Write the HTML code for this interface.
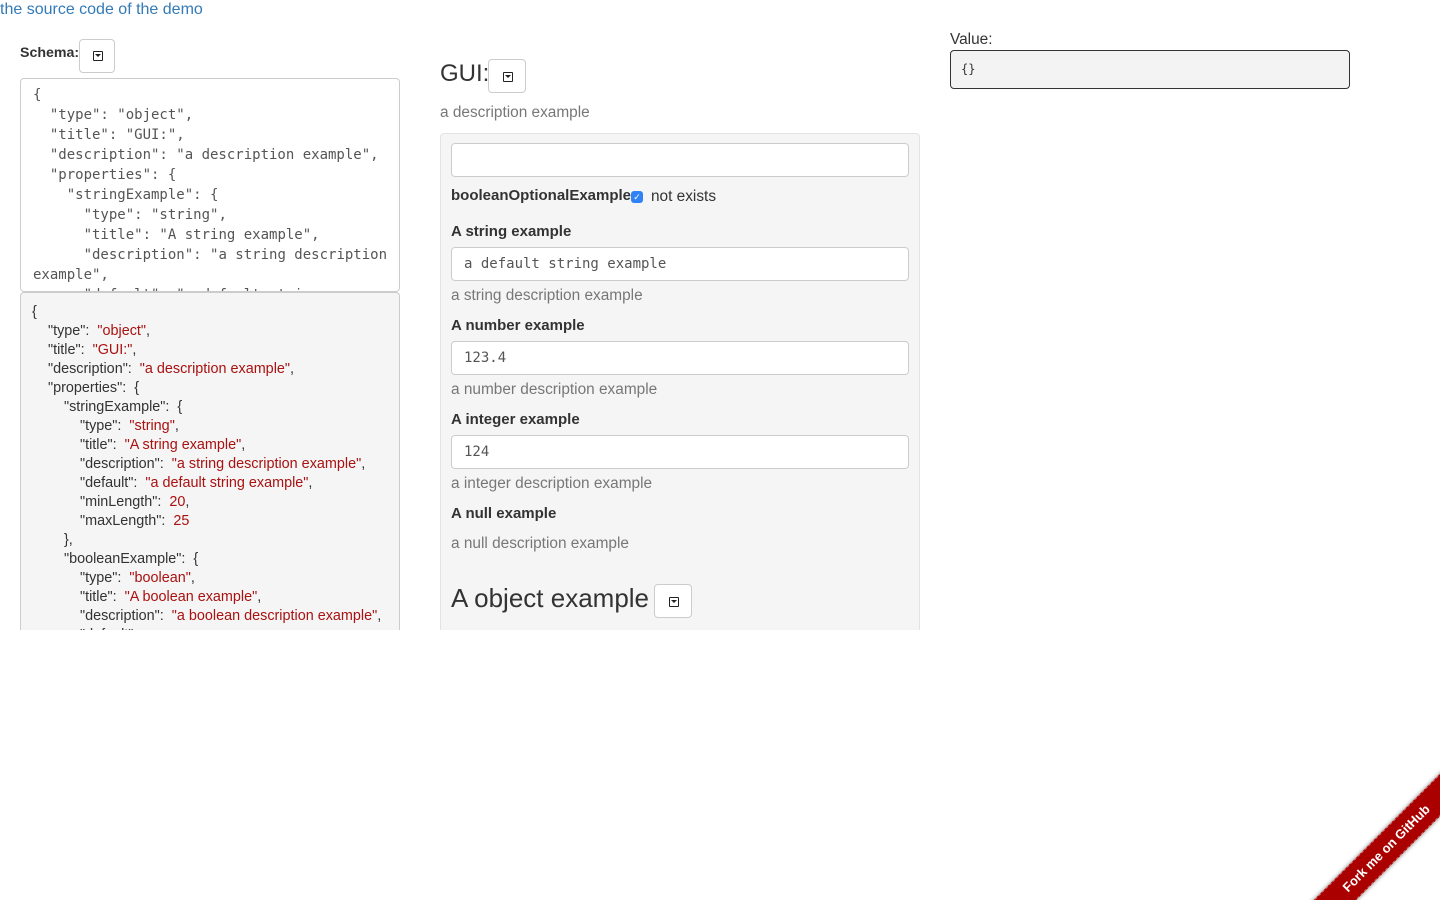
<!DOCTYPE html>
<html style="overflow:hidden;width:1440px;height:900px"><head><meta charset="utf-8"><style>
body{margin:0;width:1440px;height:900px;position:relative;overflow:hidden;background:#fff;font-family:"Liberation Sans",sans-serif;color:#333;font-size:15.4px}
.a{position:absolute}
.btn{position:absolute;width:36px;height:32px;border:1px solid #ccc;border-radius:4px;background:#fff;box-sizing:border-box}
.btn i{position:absolute;left:13px;top:11px;width:8px;height:8px;border:1.5px solid #222;border-radius:1px}
.btn i:after{content:"";position:absolute;left:1px;top:2px;border-left:3px solid transparent;border-right:3px solid transparent;border-top:3px solid #222}
.mono{font-family:"DejaVu Sans Mono","Liberation Mono",monospace}
.inp{position:absolute;left:451px;width:458px;height:34px;border:1px solid #ccc;border-radius:4px;background:#fff;box-sizing:border-box;padding:0 12px;line-height:32px;font-size:14px;color:#555}
.lbl{position:absolute;left:451px;font-weight:bold;font-size:15px;color:#333}
.help{position:absolute;left:451px;font-size:15.4px;color:#777}
pre{margin:0}
.s{color:#a11}
</style></head><body>
<div class="a" style="left:0;top:0;width:1440px;height:900px;overflow:hidden">
<div class="a" style="left:0;top:0;color:#337ab7;font-size:16px;line-height:20px">the source code of the demo</div>

<div class="a" style="left:20px;top:45px;font-weight:bold;font-size:14.2px">Schema:</div>
<div class="btn" style="left:79px;top:39px;height:34px"><i></i></div>
<div class="a" style="left:20px;top:78px;width:380px;height:214px;border:1px solid #ccc;border-radius:4px;box-sizing:border-box;overflow:hidden">
<pre class="mono" style="font-size:14px;line-height:20px;padding:6px 12px;color:#555;white-space:pre-wrap">{
  "type": "object",
  "title": "GUI:",
  "description": "a description example",
  "properties": {
    "stringExample": {
      "type": "string",
      "title": "A string example",
      "description": "a string description example",
      "default": "a default string</pre></div>
<div class="a" style="left:20px;top:292px;width:380px;height:338px;border:1px solid #ccc;border-bottom:none;border-radius:4px 4px 0 0;background:#f5f5f5;box-sizing:border-box;overflow:hidden">
<pre style="font-family:'Liberation Sans',sans-serif;font-size:14.4px;line-height:19px;padding:10px 11px;color:#333">{
    "type":  <span class="s">"object"</span>,
    "title":  <span class="s">"GUI:"</span>,
    "description":  <span class="s">"a description example"</span>,
    "properties":  {
        "stringExample":  {
            "type":  <span class="s">"string"</span>,
            "title":  <span class="s">"A string example"</span>,
            "description":  <span class="s">"a string description example"</span>,
            "default":  <span class="s">"a default string example"</span>,
            "minLength":  <span class="s">20</span>,
            "maxLength":  <span class="s">25</span>
        },
        "booleanExample":  {
            "type":  <span class="s">"boolean"</span>,
            "title":  <span class="s">"A boolean example"</span>,
            "description":  <span class="s">"a boolean description example"</span>,
            "default": </pre></div>

<div class="a" style="left:440px;top:58px;font-size:24px;line-height:32px">GUI:</div>
<div class="btn" style="left:488px;top:59px;height:34px;width:38px"><i style="left:14px;top:12px"></i></div>
<div class="a" style="left:440px;top:104px;color:#777">a description example</div>
<div class="a" style="left:440px;top:133px;width:480px;height:497px;background:#f5f5f5;border:1px solid #e3e3e3;border-bottom:none;border-radius:4px 4px 0 0;box-sizing:border-box"></div>
<div class="inp" style="top:143px"></div>
<div class="lbl" style="top:187px">booleanOptionalExample</div>
<div class="a" style="left:631px;top:191px;width:12px;height:12px;background:#2f83f6;border-radius:3px;color:#fff;font-size:9px;line-height:12px;text-align:center">✓</div>
<div class="a" style="left:651px;top:188px">not exists</div>
<div class="lbl" style="top:223px">A string example</div>
<div class="inp mono" style="top:247px;font-size:14px">a default string example</div>
<div class="help" style="top:287px">a string description example</div>
<div class="lbl" style="top:317px">A number example</div>
<div class="inp mono" style="top:341px;font-size:14px">123.4</div>
<div class="help" style="top:381px">a number description example</div>
<div class="lbl" style="top:411px">A integer example</div>
<div class="inp mono" style="top:435px;font-size:14px">124</div>
<div class="help" style="top:475px">a integer description example</div>
<div class="lbl" style="top:505px">A null example</div>
<div class="help" style="top:535px">a null description example</div>
<div class="a" style="left:451px;top:583px;font-size:26px;line-height:30px">A object example</div>
<div class="btn" style="left:654px;top:584px;height:34px;width:38px"><i style="left:14px;top:12px"></i></div>

<div class="a" style="left:950px;top:31px">Value:</div>
<div class="a mono" style="left:950px;top:50px;width:400px;height:39px;border:1px solid #333;border-radius:4px;background:#f3f3f3;box-sizing:border-box;padding:0 10px;line-height:37px;font-size:12px;color:#333">{}</div>

<div class="a" style="left:1228px;top:842px;width:300px;height:30px;background:#a00;transform:rotate(-45deg);box-shadow:0 0 4px rgba(0,0,0,.5);color:#fff;font-weight:bold;font-size:13px;line-height:28px;text-align:center;padding-left:24px;border-top:1px dashed rgba(255,255,255,.4);border-bottom:1px dashed rgba(255,255,255,.4);box-sizing:border-box">Fork me on GitHub</div>
</div>
</body></html>
